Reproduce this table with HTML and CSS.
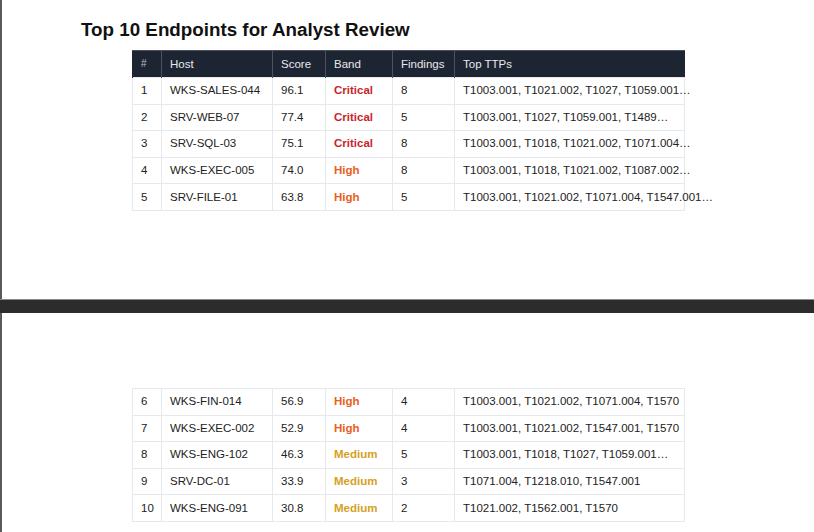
FILE: index.html
```html
<!DOCTYPE html>
<html>
<head>
<meta charset="utf-8">
<link rel="stylesheet" href="styles.css">
</head>
<body>
<div class="viewer">
  <div class="page page-1">
    <h1 class="title">Top 10 Endpoints for Analyst Review</h1>
    <table class="grid">
      <colgroup>
        <col class="c-num"><col class="c-host"><col class="c-score"><col class="c-band"><col class="c-find"><col class="c-ttp">
      </colgroup>
      <thead>
        <tr><th class="h-num">#</th><th>Host</th><th>Score</th><th>Band</th><th>Findings</th><th>Top TTPs</th></tr>
      </thead>
      <tbody>
        <tr><td>1</td><td>WKS-SALES-044</td><td>96.1</td><td class="crit">Critical</td><td>8</td><td>T1003.001, T1021.002, T1027, T1059.001…</td></tr>
        <tr><td>2</td><td>SRV-WEB-07</td><td>77.4</td><td class="crit">Critical</td><td>5</td><td>T1003.001, T1027, T1059.001, T1489…</td></tr>
        <tr><td>3</td><td>SRV-SQL-03</td><td>75.1</td><td class="crit">Critical</td><td>8</td><td>T1003.001, T1018, T1021.002, T1071.004…</td></tr>
        <tr><td>4</td><td>WKS-EXEC-005</td><td>74.0</td><td class="high">High</td><td>8</td><td>T1003.001, T1018, T1021.002, T1087.002…</td></tr>
        <tr><td>5</td><td>SRV-FILE-01</td><td>63.8</td><td class="high">High</td><td>5</td><td>T1003.001, T1021.002, T1071.004, T1547.001…</td></tr>
      </tbody>
    </table>
  </div>
  <div class="gap"></div>
  <div class="page page-2">
    <table class="grid">
      <colgroup>
        <col class="c-num"><col class="c-host"><col class="c-score"><col class="c-band"><col class="c-find"><col class="c-ttp">
      </colgroup>
      <tbody>
        <tr><td>6</td><td>WKS-FIN-014</td><td>56.9</td><td class="high">High</td><td>4</td><td>T1003.001, T1021.002, T1071.004, T1570</td></tr>
        <tr><td>7</td><td>WKS-EXEC-002</td><td>52.9</td><td class="high">High</td><td>4</td><td>T1003.001, T1021.002, T1547.001, T1570</td></tr>
        <tr><td>8</td><td>WKS-ENG-102</td><td>46.3</td><td class="med">Medium</td><td>5</td><td>T1003.001, T1018, T1027, T1059.001…</td></tr>
        <tr><td>9</td><td>SRV-DC-01</td><td>33.9</td><td class="med">Medium</td><td>3</td><td>T1071.004, T1218.010, T1547.001</td></tr>
        <tr><td>10</td><td>WKS-ENG-091</td><td>30.8</td><td class="med">Medium</td><td>2</td><td>T1021.002, T1562.001, T1570</td></tr>
      </tbody>
    </table>
  </div>
</div>
</body>
</html>
```
FILE: styles.css
```css
html, body {
  margin: 0;
  padding: 0;
}
body {
  background: #2e2e2e;
  font-family: "Liberation Sans", Arial, sans-serif;
  overflow: hidden;
}
.viewer {
  display: flex;
  flex-direction: column;
  width: 814px;
  height: 532px;
  background: #2e2e2e;
  box-shadow: inset 2px 0 0 #5a5a5a;
}
.page {
  background: #ffffff;
  margin-left: 2px;
  box-sizing: border-box;
}
.page-1 {
  height: 299px;
  padding-top: 20px;
}
.gap {
  height: 14px;
  flex: none;
  background: #2c2c2c;
  border-top: 1px solid #8a8a8a;
  box-sizing: border-box;
}
.page-2 {
  flex: 1;
  padding-top: 75px;
}
.title {
  margin: 0 0 10px 79px;
  font-size: 18.8px;
  line-height: 20px;
  font-weight: bold;
  color: #111111;
}
.grid {
  margin-left: 130px;
  border-collapse: collapse;
  table-layout: fixed;
  width: 552px;
  font-size: 11.5px;
  color: #222222;
}
.c-num { width: 29px; }
.c-host { width: 111px; }
.c-score { width: 53px; }
.c-band { width: 67px; }
.c-find { width: 62px; }
.c-ttp { width: 230px; }
.grid th {
  background: #1e2532;
  color: #e6e8ec;
  font-weight: normal;
  text-align: left;
  height: 25px;
  padding: 0 8px 1px;
  border-left: 1px solid #4a5261;
  border-top: 1px solid #4a5261;
  white-space: nowrap;
}
.grid th:first-child { border-left: 1px solid #1e2532; }
.grid .h-num {
  font-size: 10px;
  color: #b8bcc4;
}
.grid td {
  height: 24.6px;
  padding: 0 8px 1px;
  border: 1px solid #e6e8eb;
  white-space: nowrap;
  overflow: visible;
}
.crit { color: #c9252c; font-weight: bold; }
.high { color: #e8601c; font-weight: bold; }
.med { color: #d4a11e; font-weight: bold; }
```
